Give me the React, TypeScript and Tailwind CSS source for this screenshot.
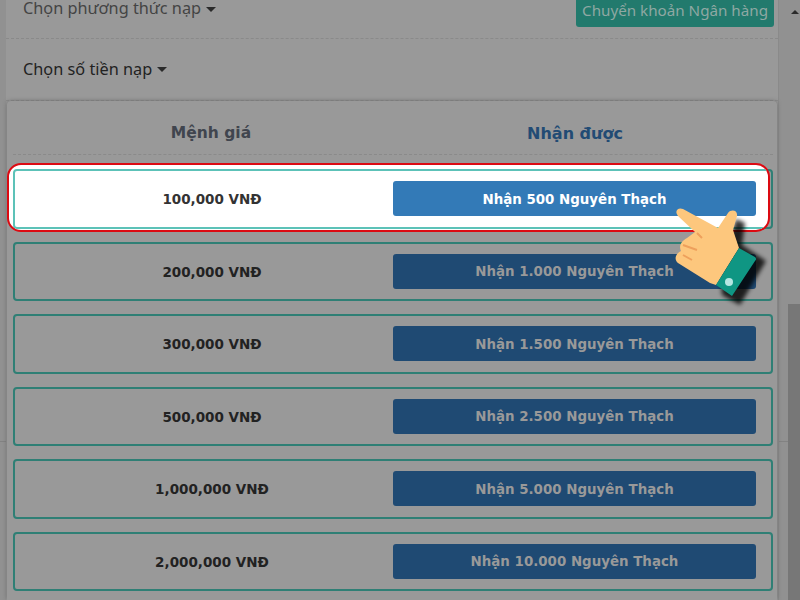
const rows = [
  { price: "200,000 VNĐ", label: "Nhận 1.000 Nguyên Thạch" },
  { price: "300,000 VNĐ", label: "Nhận 1.500 Nguyên Thạch" },
  { price: "500,000 VNĐ", label: "Nhận 2.500 Nguyên Thạch" },
  { price: "1,000,000 VNĐ", label: "Nhận 5.000 Nguyên Thạch" },
  { price: "2,000,000 VNĐ", label: "Nhận 10.000 Nguyên Thạch" },
];

function Caret() {
  return <span className="ml-[5px] inline-block h-0 w-0 border-x-[5px] border-t-[5px] border-x-transparent border-t-[#2a2a2a] align-middle" />;
}

function Hand() {
  return (
    <svg className="absolute left-[670px] top-[205px]" width="105" height="110" viewBox="0 0 105 110">
      <defs>
        <filter id="hand-shadow" x="-20%" y="-20%" width="140%" height="140%">
          <feGaussianBlur stdDeviation="2" />
        </filter>
      </defs>
      <g filter="url(#hand-shadow)" fill="#000" opacity="0.8">
        <path d="M66 14 L75 18 L72 40 L96 56 L70 100 L52 90 L50 60 Z" />
      </g>
      <path
        d="M13 4 L48 23 L58 8 C61 4 68 5 67 11 L63 25 L69 43 L46 80 L40 78 L8 58 C4 55 5 49 11 46 C9 42 10 37 17 33 L25 27 L8 11 C4 6 8 2 13 4 Z"
        fill="#fdc77d"
      />
      <path d="M27 28 L32 33 M13 40 L27 45 M13 50 L22 55" stroke="#eea05c" strokeWidth="2" fill="none" />
      <path d="M69 43 L85 52 C87 54 86 55 85 56 L62 91 L46 80 Z" fill="#0f9683" />
      <circle cx="59" cy="77" r="4" fill="#b5e6e2" />
    </svg>
  );
}

export default function App() {
  return (
    <div className="relative flex h-[600px] w-[800px] overflow-hidden bg-[#919191] [font-family:'DejaVu_Sans',sans-serif]">
      <div className="absolute left-0 right-0 top-[441px] h-px bg-[#828282]" />
      <div className="relative ml-[6px] flex h-[600px] w-[773px] flex-col border-r border-[#8a8a8a] bg-[#999999]">
        <div className="flex h-[39px] shrink-0 items-start justify-between border-b border-dashed border-[#8a8a8a] pl-[17px] pr-[4px]">
          <div className="-mt-[4px] text-[16.3px] leading-[24px] text-[#444] [font-family:'Noto_Sans',sans-serif]">Chọn phương thức nạp<Caret /></div>
          <div className="-mt-[3px] flex h-[30px] items-center rounded-[3px] bg-[#227a6d] px-[6px] pb-[3px] text-[15.2px] text-[#8fa8a3] [font-family:'Noto_Sans',sans-serif]">Chuyển khoản Ngân hàng</div>
        </div>
        <div className="flex h-[62px] shrink-0 items-center border-b border-dashed border-[#8a8a8a] pl-[17px] text-[16.3px] text-[#222] [font-family:'Noto_Sans',sans-serif]">Chọn số tiền nạp<Caret /></div>
        <div className="relative mx-px flex-1 rounded-t-[4px] bg-[#999999] pl-[6px] pr-[4px] shadow-[0_0_4px_#6a6a6a]">
          <div className="flex h-[54px] items-center border-b border-dashed border-[#8a8a8a] pt-[13px] font-bold">
            <div className="w-[392px] pl-[4px] text-center text-[15.5px] text-[#40454e]">Mệnh giá</div>
            <div className="flex-1 pr-[28px] text-center text-[16px] text-[#224b74]">Nhận được</div>
          </div>
          <div className="relative mt-[14px] flex h-[59.5px] items-center rounded-[4px] border-2 border-[#2f7f75]">
            <div className="absolute -bottom-[5px] -left-[8px] -top-[8px] right-[1px] overflow-hidden rounded-[14px] border-2 border-[#dc0a12] bg-white">
              <div className="ml-[4px] mt-[4px] h-[59.5px] w-[800px] rounded-[4px] border-2 border-[#5cc2b8]" />
            </div>
            <div className="relative w-[378px] pl-[16px] pt-[1px] text-center text-[13.5px] font-bold text-[#333]">100,000 VNĐ</div>
            <div className="relative flex h-[35px] w-[363px] items-center justify-center rounded-[3px] bg-[#337ab7] pt-[2px] text-[13.4px] font-bold text-white">Nhận 500 Nguyên Thạch</div>
          </div>
          <div className="mt-[13px] flex flex-col gap-[13px]">
            {rows.map((row) => (
              <div key={row.price} className="flex h-[59.5px] items-center rounded-[4px] border-2 border-[#2f7f75]">
                <div className="w-[378px] pl-[16px] pt-[1px] text-center text-[13.5px] font-bold text-[#222]">{row.price}</div>
                <div className="flex h-[35px] w-[363px] items-center justify-center rounded-[3px] bg-[#1f4a73] pt-[2px] text-[13.4px] font-bold text-[#999]">{row.label}</div>
              </div>
            ))}
          </div>
        </div>
      </div>
      <div className="relative flex flex-1 flex-col items-end">
        <div className="mr-px mt-[10px] h-0 w-0 border-x-[4px] border-b-[4px] border-x-transparent border-b-[#2a2a2a]" />
        <div className="mt-[290px] h-[296px] w-[12px] bg-[#777]" />
      </div>
      <Hand />
    </div>
  );
}
